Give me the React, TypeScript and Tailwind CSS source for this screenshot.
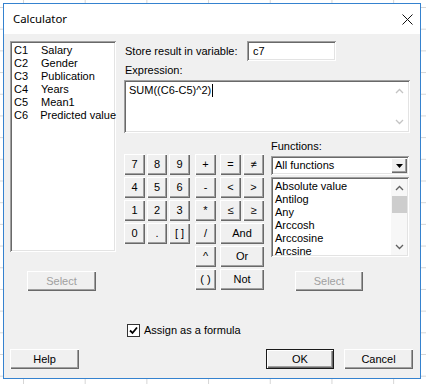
import type { ReactNode } from "react";

// ─── Win32 bevels ───────────────────────────────────────────────────────────

const raised =
  "bg-[#f0f0f0] shadow-[inset_1px_1px_0_#ffffff,inset_-1px_-1px_0_#696969,inset_-2px_-2px_0_#a0a0a0]";
const defaultRaised =
  "bg-[#f0f0f0] shadow-[inset_0_0_0_1px_#1a1a1a,inset_2px_2px_0_#ffffff,inset_-2px_-2px_0_#696969,inset_-3px_-3px_0_#a0a0a0]";
const sunken =
  "bg-white shadow-[inset_1px_1px_0_#a0a0a0,inset_-1px_-1px_0_#ffffff,inset_2px_2px_0_#696969,inset_-2px_-2px_0_#e3e3e3]";

const columns = [
  ["C1", "Salary"],
  ["C2", "Gender"],
  ["C3", "Publication"],
  ["C4", "Years"],
  ["C5", "Mean1"],
  ["C6", "Predicted value"],
];

const functions = [
  "Absolute value",
  "Antilog",
  "Any",
  "Arccosh",
  "Arccosine",
  "Arcsine",
];

function Btn({
  children,
  className = "",
  disabled = false,
  isDefault = false,
}: Readonly<{
  children: ReactNode;
  className?: string;
  disabled?: boolean;
  isDefault?: boolean;
}>) {
  return (
    <button
      type="button"
      className={`flex items-center justify-center leading-none ${
        isDefault ? defaultRaised : raised
      } ${disabled ? "text-[#a0a0a0]" : "text-black"} ${className}`}
    >
      {children}
    </button>
  );
}

function Chevron({ up, color }: Readonly<{ up: boolean; color: string }>) {
  return (
    <svg width="9" height="6" viewBox="0 0 9 6" aria-hidden="true">
      <polyline
        points={up ? "1,5 4.5,1.5 8,5" : "1,1 4.5,4.5 8,1"}
        fill="none"
        stroke={color}
        strokeWidth="1.3"
      />
    </svg>
  );
}

// ─── Dialog ─────────────────────────────────────────────────────────────────

export default function App() {
  return (
    <div
      className="w-[426px] h-[384px] overflow-hidden pl-[3px] pt-[3px] bg-white bg-[linear-gradient(to_right,#d6d6d6_1px,transparent_1px),linear-gradient(to_bottom,#d6d6d6_1px,transparent_1px)] [background-size:61.7px_21.7px] [background-position:23px_7px]"
      style={{ fontFamily: '"Liberation Sans", Arial, sans-serif' }}
    >
      <div className="w-[418px] h-[376px] border border-[#3582cf] bg-[#f0f0f0] flex flex-col text-[11px] text-black">
        {/* Title bar */}
        <div className="h-[30px] shrink-0 bg-white flex items-center justify-between pl-[9px] pr-[7px]">
          <span
            className="text-[11.4px] text-black"
            style={{ fontFamily: '"Noto Sans", sans-serif' }}
          >
            Calculator
          </span>
          <svg width="11" height="11" viewBox="0 0 11 11" aria-hidden="true">
            <path d="M0.5 0.5 L10.5 10.5 M10.5 0.5 L0.5 10.5" stroke="#111" strokeWidth="1" />
          </svg>
        </div>

        {/* Body */}
        <div className="flex-1 flex flex-col pl-[6px] pt-[7px]">
          <div className="flex">
            {/* Column list */}
            <div className="w-[106px] flex flex-col">
              <div className={`h-[211px] pt-[3px] pl-[4px] ${sunken}`}>
                {columns.map(([c, name]) => (
                  <div key={c} className="flex h-[13px] leading-[13px] whitespace-nowrap">
                    <span className="w-[27px]">{c}</span>
                    <span>{name}</span>
                  </div>
                ))}
              </div>
              <Btn disabled className="mt-[19px] ml-[17px] w-[69px] h-[20px]">
                Select
              </Btn>
            </div>

            {/* Right side */}
            <div className="ml-[8px] w-[286px] flex flex-col">
              <div className="flex items-center h-[20px]">
                <span className="w-[123px] pl-[1px]">Store result in variable:</span>
                <div className={`w-[89px] h-[20px] pl-[6px] flex items-center ${sunken}`}>c7</div>
              </div>
              <div className="h-[19px] flex items-center pl-[1px]">Expression:</div>
              <div className={`h-[53px] flex ${sunken}`}>
                <div className="flex-1 pl-[5px] pt-[4px] leading-[13px] flex items-start">
                  <span>SUM((C6-C5)^2)</span>
                  <span className="inline-block w-px h-[13px] bg-black ml-[1px]" />
                </div>
                <div className="w-[17px] my-[2px] mr-[2px] flex flex-col justify-between items-center py-[6px]">
                  <Chevron up color="#c4c4c4" />
                  <Chevron up={false} color="#c4c4c4" />
                </div>
              </div>

              <div className="flex">
                {/* Keypad */}
                <div className="mt-[21px] flex">
                  <div className="grid grid-cols-[21px_20px_21px] auto-rows-[21px] gap-x-[2px] gap-y-[2px] self-start">
                    {["7", "8", "9", "4", "5", "6", "1", "2", "3", "0", ".", "[ ]"].map((k) => (
                      <Btn key={k}>{k}</Btn>
                    ))}
                  </div>
                  <div className="ml-[5px] grid grid-cols-[21px] auto-rows-[21px] gap-y-[2px]">
                    {["+", "-", "*", "/", "^", "( )"].map((k) => (
                      <Btn key={k}>{k}</Btn>
                    ))}
                  </div>
                  <div className="ml-[4px] grid grid-cols-[21px_21px] auto-rows-[21px] gap-[2px]">
                    <Btn>=</Btn>
                    <Btn>≠</Btn>
                    <Btn>&lt;</Btn>
                    <Btn>&gt;</Btn>
                    <Btn>≤</Btn>
                    <Btn>≥</Btn>
                    <Btn className="col-span-2">And</Btn>
                    <Btn className="col-span-2">Or</Btn>
                    <Btn className="col-span-2">Not</Btn>
                  </div>
                </div>

                {/* Functions */}
                <div className="ml-[7px] w-[138px] mt-[7px] flex flex-col">
                  <div className="h-[13px] leading-[13px]">Functions:</div>
                  <div className={`mt-[3px] h-[19px] flex items-center ${sunken}`}>
                    <span className="flex-1 pl-[4px]">All functions</span>
                    <div className={`w-[16px] h-[15px] mr-[2px] flex items-center justify-center ${raised}`}>
                      <svg width="7" height="4" viewBox="0 0 7 4" aria-hidden="true">
                        <polygon points="0,0 7,0 3.5,4" fill="#000" />
                      </svg>
                    </div>
                  </div>
                  <div className={`mt-[2px] h-[80px] flex ${sunken}`}>
                    <div className="flex-1 pl-[4px] pt-[3px]">
                      {functions.map((f) => (
                        <div key={f} className="h-[13px] leading-[13px] whitespace-nowrap">
                          {f}
                        </div>
                      ))}
                    </div>
                    <div className="w-[16px] my-[2px] mr-[2px] flex flex-col items-center bg-[#f7f7f7]">
                      <div className="h-[17px] flex items-center justify-center">
                        <Chevron up color="#606060" />
                      </div>
                      <div className="w-[15px] h-[17px] bg-[#cdcdcd]" />
                      <div className="flex-1" />
                      <div className="h-[17px] flex items-center justify-center">
                        <Chevron up={false} color="#606060" />
                      </div>
                    </div>
                  </div>
                  <Btn disabled className="mt-[14px] ml-[24px] w-[68px] h-[20px]">
                    Select
                  </Btn>
                </div>
              </div>
            </div>
          </div>

          {/* Assign as a formula */}
          <div className="mt-[33px] ml-[117px] flex items-center h-[13px]">
            <div className="w-[13px] h-[13px] border border-[#333] bg-white flex items-center justify-center">
              <svg width="9" height="9" viewBox="0 0 9 9" aria-hidden="true">
                <polyline points="1,4.5 3.5,7 8,1.5" fill="none" stroke="#000" strokeWidth="1.8" />
              </svg>
            </div>
            <span className="ml-[4px]">Assign as a formula</span>
          </div>

          {/* Bottom buttons */}
          <div className="mt-[12px] flex pr-[7px]">
            <Btn className="w-[69px] h-[20px]">Help</Btn>
            <Btn isDefault className="ml-auto w-[68px] h-[20px]">
              OK
            </Btn>
            <Btn className="ml-[10px] w-[69px] h-[20px]">Cancel</Btn>
          </div>
        </div>
      </div>
    </div>
  );
}
